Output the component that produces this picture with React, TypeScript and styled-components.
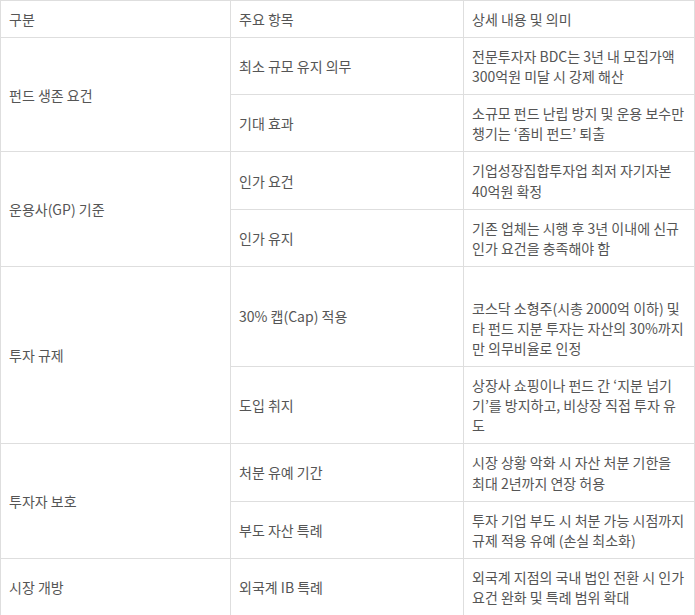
import React from 'react'
import styled, { createGlobalStyle } from 'styled-components'

const GlobalStyle = createGlobalStyle`
    body {
        margin: 0;
        background: #fff;
    }
`

type Row = {
    group?: string
    span?: number
    item: string
    detail: string
    lifted?: boolean
}

const rows: Row[] = [
    { group: '펀드 생존 요건', span: 2, item: '최소 규모 유지 의무', detail: '전문투자자 BDC는 3년 내 모집가액 300억원 미달 시 강제 해산' },
    { item: '기대 효과', detail: '소규모 펀드 난립 방지 및 운용 보수만 챙기는 ‘좀비 펀드’ 퇴출' },
    { group: '운용사(GP) 기준', span: 2, item: '인가 요건', detail: '기업성장집합투자업 최저 자기자본 40억원 확정' },
    { item: '인가 유지', detail: '기존 업체는 시행 후 3년 이내에 신규 인가 요건을 충족해야 함' },
    { group: '투자 규제', span: 2, item: '30% 캡(Cap) 적용', detail: '코스닥 소형주(시총 2000억 이하) 및 타 펀드 지분 투자는 자산의 30%까지만 의무비율로 인정', lifted: true },
    { item: '도입 취지', detail: '상장사 쇼핑이나 펀드 간 ‘지분 넘기기’를 방지하고, 비상장 직접 투자 유도' },
    { group: '투자자 보호', span: 2, item: '처분 유예 기간', detail: '시장 상황 악화 시 자산 처분 기한을 최대 2년까지 연장 허용' },
    { item: '부도 자산 특례', detail: '투자 기업 부도 시 처분 가능 시점까지 규제 적용 유예 (손실 최소화)' },
    { group: '시장 개방', span: 1, item: '외국계 IB 특례', detail: '외국계 지점의 국내 법인 전환 시 인가 요건 완화 및 특례 범위 확대' },
]

export default function App() {
    return (
        <>
            <GlobalStyle />
            <Table>
                <colgroup>
                    <col style={{ width: 230 }} />
                    <col style={{ width: 233 }} />
                    <col />
                </colgroup>
                <thead>
                    <tr>
                        <Cell as='th'>구분</Cell>
                        <Cell as='th'>주요 항목</Cell>
                        <Cell as='th'>상세 내용 및 의미</Cell>
                    </tr>
                </thead>
                <tbody>
                    {rows.map((row, i) => (
                        <tr key={i}>
                            {row.group && <Cell rowSpan={row.span}>{row.group}</Cell>}
                            <Cell>{row.item}</Cell>
                            <Cell $lifted={row.lifted}>{row.detail}</Cell>
                        </tr>
                    ))}
                </tbody>
            </Table>
        </>
    )
}

const Table = styled.table`
    width: 695px;
    border-collapse: collapse;
    table-layout: fixed;
    font-family: 'Noto Sans CJK KR', 'Noto Sans', sans-serif;
    font-size: 14px;
    line-height: 20.1px;
    color: #555;
`

const Cell = styled.td<{ $lifted?: boolean }>`
    border: 1px solid #dedede;
    padding: ${p => (p.$lifted ? '31px 8px 8px' : '8px 8px')};
    text-align: left;
    vertical-align: middle;
    font-weight: 400;
    word-break: normal;
`
